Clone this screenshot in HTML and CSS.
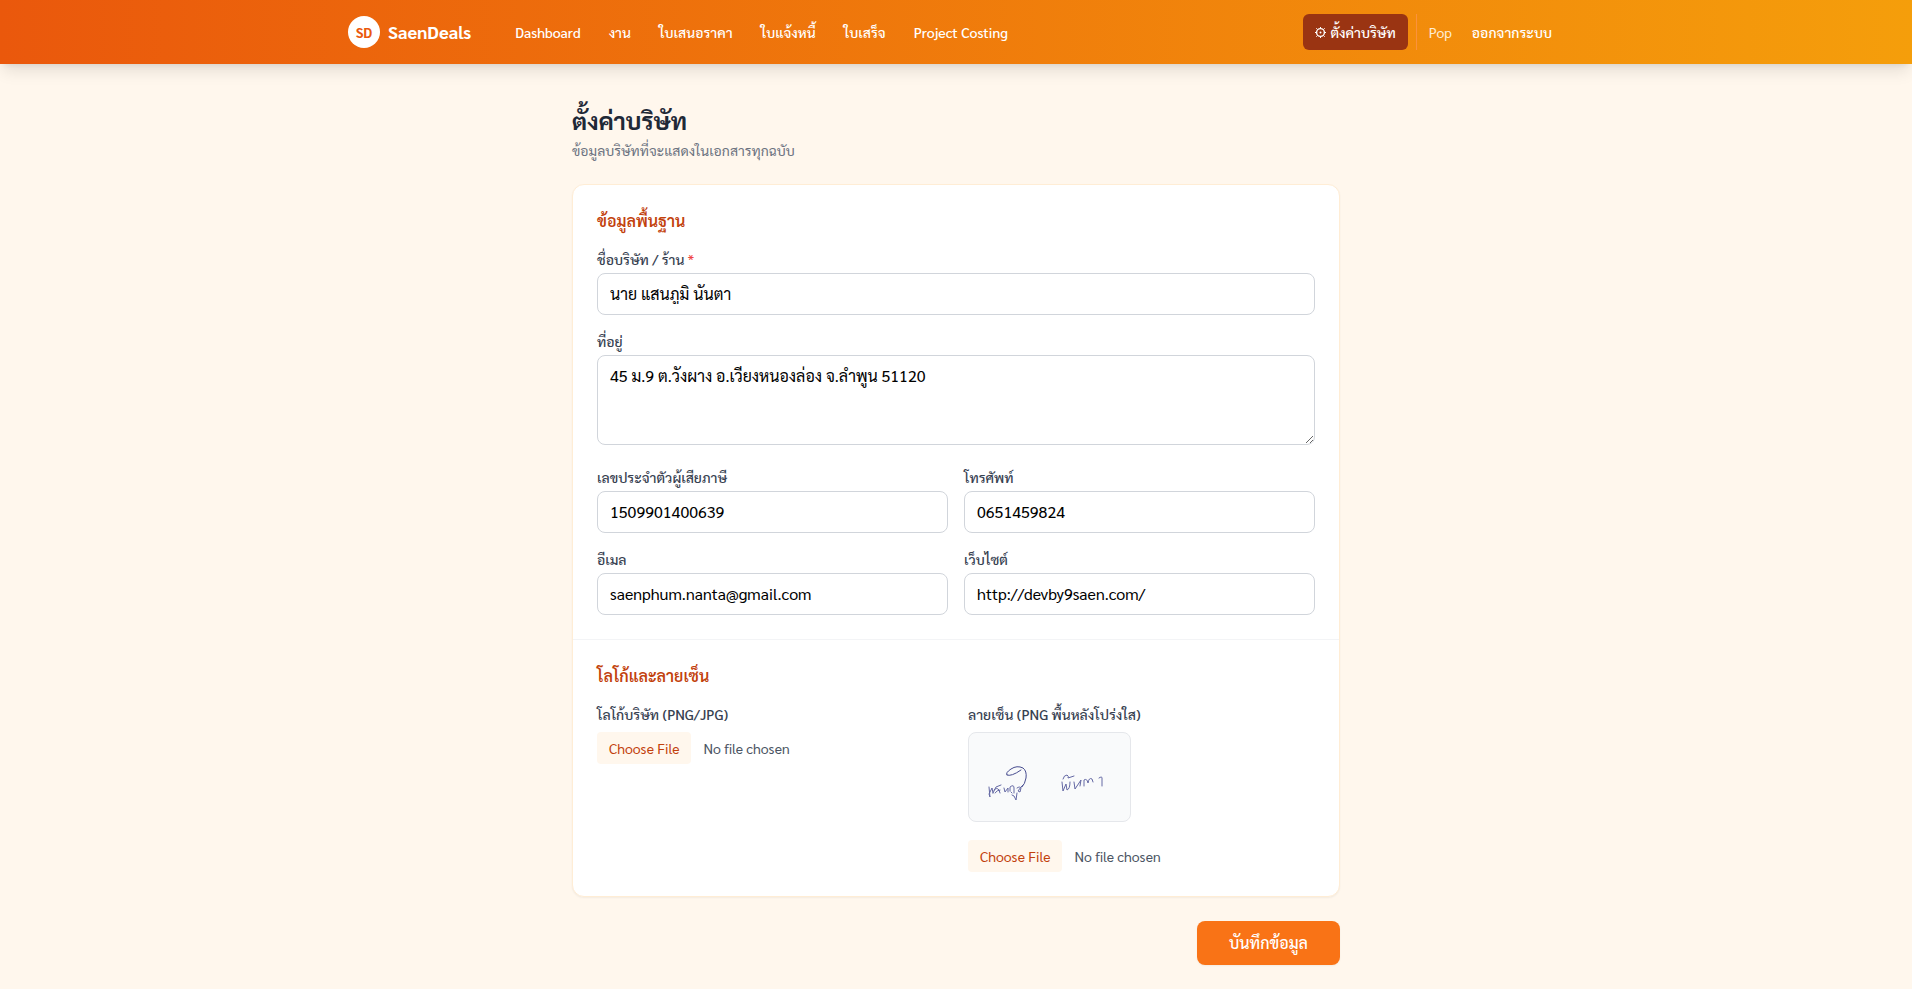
FILE: index.html
```html
<!DOCTYPE html>
<html lang="th">
<head>
  <meta charset="UTF-8">
  <meta name="viewport" content="width=device-width, initial-scale=1.0">
  <title>ตั้งค่าบริษัท - SaenDeals</title>
  <link rel="stylesheet" href="styles.css">
</head>
<body>
  <header class="navbar">
    <div class="navbar-inner">
      <a href="#" class="brand">
        <span class="brand-logo">SD</span>
        <span class="brand-name">SaenDeals</span>
      </a>
      <nav class="nav-links">
        <a href="#" class="nav-link">Dashboard</a>
        <a href="#" class="nav-link">งาน</a>
        <a href="#" class="nav-link">ใบเสนอราคา</a>
        <a href="#" class="nav-link">ใบแจ้งหนี้</a>
        <a href="#" class="nav-link">ใบเสร็จ</a>
        <a href="#" class="nav-link">Project Costing</a>
      </nav>
      <div class="nav-user">
        <a href="#" class="nav-link active">
          <svg class="gear" viewBox="0 0 11 11" fill="none" stroke="currentColor" aria-hidden="true">
            <circle cx="5.5" cy="5.5" r="3.9" stroke-width="1.4"/>
            <circle cx="5.5" cy="5.5" r="1" fill="currentColor" stroke="none"/>
            <path d="M5.500 0v1.200M5.500 9.800V11M0 5.500h1.200M9.800 5.500H11M1.300 1.300l1 1M8.700 8.700l1 1M9.700 1.300l-1 1M2.300 8.700l-1 1"/>
          </svg>
          ตั้งค่าบริษัท
        </a>
        <div class="user-box">
          <span class="user-name">Pop</span>
          <button type="button" class="nav-link">ออกจากระบบ</button>
        </div>
      </div>
    </div>
  </header>

  <main class="page">
    <h1>ตั้งค่าบริษัท</h1>
    <p class="subtitle">ข้อมูลบริษัทที่จะแสดงในเอกสารทุกฉบับ</p>

    <form>
      <div class="card">
        <section class="card-section">
          <h2>ข้อมูลพื้นฐาน</h2>
          <div class="fields">
            <div class="field full">
              <label for="company">ชื่อบริษัท / ร้าน <span class="required">*</span></label>
              <input type="text" id="company" value="นาย แสนภูมิ นันตา" required>
            </div>
            <div class="field full">
              <label for="address">ที่อยู่</label>
              <textarea id="address" rows="3">45 ม.9 ต.วังผาง อ.เวียงหนองล่อง จ.ลำพูน 51120</textarea>
            </div>
            <div class="field">
              <label for="tax-id">เลขประจำตัวผู้เสียภาษี</label>
              <input type="text" id="tax-id" value="1509901400639">
            </div>
            <div class="field">
              <label for="phone">โทรศัพท์</label>
              <input type="text" id="phone" value="0651459824">
            </div>
            <div class="field">
              <label for="email">อีเมล</label>
              <input type="email" id="email" value="saenphum.nanta@gmail.com">
            </div>
            <div class="field">
              <label for="website">เว็บไซต์</label>
              <input type="text" id="website" value="http://devby9saen.com/">
            </div>
          </div>
        </section>

        <section class="card-section">
          <h2>โลโก้และลายเซ็น</h2>
          <div class="uploads">
            <div class="upload">
              <label for="logo">โลโก้บริษัท (PNG/JPG)</label>
              <input type="file" id="logo" accept="image/*">
            </div>
            <div class="upload">
              <label for="signature">ลายเซ็น (PNG พื้นหลังโปร่งใส)</label>
              <div class="preview">
                <svg viewBox="0 0 161 88" role="img" aria-label="ลายเซ็น" fill="none" stroke="#6468a4" stroke-linecap="round" stroke-linejoin="round">
                  <path d="M20 54l1 10-1-3 3-6 1 5M24 60l3-6 5-2M25 57q3-3 5 0l1 3M26 60q2-3 5-3M35 55l1 4 3-4 0 4M41 58l0-4q4-3 4 1l0 5M42 59l1 1M43 62l2 1 2 4 1-7M48 55q3-2 4 0l-1 4-2-1 3-4 2-2"/>
                  <path d="M38 42q-2-2 4-6 6-4 12-1 4 3 3 10-1 6-4 9M38 42q4 2 14-5" stroke="#474c8f"/>
                  <path d="M93 49l1 9 3-7 1 6q3-1 3-8M94 46q1-4 4-4 2 1 1 3l6-2M105 49l1 7 6-9-1 6M115 53v-6q3-2 4 3 1-6 4-4l1 3M130 45q3-2 3 0v8"/>
                </svg>
              </div>
              <input type="file" id="signature" accept="image/png">
            </div>
          </div>
        </section>
      </div>

      <div class="actions">
        <button type="submit" class="save-button">บันทึกข้อมูล</button>
      </div>
    </form>
  </main>
</body>
</html>
```
FILE: styles.css
```css
* {
  box-sizing: border-box;
}
body {
  margin: 0;
  background: #fff7ed;
  color: #000;
  font-family: Sarabun, Roboto, 'Noto Sans Thai', 'Noto Sans', sans-serif;
  font-size: 16px;
  line-height: 24px;
}
h1, h2, p {
  margin: 0;
}
button, input, textarea {
  font: inherit;
  color: inherit;
}

/* Navbar */
.navbar {
  background: linear-gradient(to right, #ea580c, #f59e0b);
  box-shadow: 0 10px 15px -3px rgba(0, 0, 0, 0.1), 0 4px 6px -4px rgba(0, 0, 0, 0.1);
  color: #fff;
}
.navbar-inner {
  display: flex;
  align-items: center;
  max-width: 1280px;
  height: 64px;
  margin: 0 auto;
  padding: 0 32px;
}
.brand {
  display: flex;
  align-items: center;
  gap: 8px;
  margin-right: 32px;
  color: #fff;
  text-decoration: none;
  white-space: nowrap;
}
.brand-logo {
  display: flex;
  align-items: center;
  justify-content: center;
  width: 32px;
  height: 32px;
  border-radius: 50%;
  background: #fff;
  color: #ea580c;
  font-size: 14px;
  font-weight: 700;
}
.brand-name {
  font-size: 18px;
  font-weight: 700;
}
.nav-links {
  display: flex;
  gap: 4px;
}
.nav-link {
  display: flex;
  align-items: center;
  gap: 4px;
  padding: 8px 12px;
  border: 0;
  border-radius: 6px;
  background: transparent;
  color: #fff;
  font-size: 14px;
  font-weight: 500;
  line-height: 20px;
  text-decoration: none;
  white-space: nowrap;
  cursor: pointer;
}
.nav-link.active {
  background: #9a3412;
}
.gear {
  width: 11px;
  height: 11px;
}
.nav-user {
  display: flex;
  gap: 8px;
  margin-left: auto;
}
.user-box {
  display: flex;
  align-items: center;
  gap: 8px;
  padding-left: 12px;
  border-left: 1px solid #fb923c;
}
.user-name {
  color: #ffedd5;
  font-size: 14px;
}

/* Page */
.page {
  max-width: 768px;
  margin: 0 auto;
  padding: 40px 0 24px;
}
h1 {
  color: #1f2937;
  font-size: 24px;
  font-weight: 700;
  line-height: 32px;
}
.subtitle {
  margin: 4px 0 24px;
  color: #6b7280;
  font-size: 14px;
  line-height: 20px;
}
.card {
  border: 1px solid #ffedd5;
  border-radius: 12px;
  background: #fff;
  box-shadow: 0 1px 2px rgba(0, 0, 0, 0.05);
}
.card-section {
  padding: 24px;
}
.card-section + .card-section {
  border-top: 1px solid #f3f4f6;
}
h2 {
  margin-bottom: 16px;
  color: #c2410c;
  font-size: 16px;
  font-weight: 600;
}
label {
  display: block;
  color: #374151;
  font-size: 14px;
  font-weight: 500;
  line-height: 20px;
}
.required {
  color: #ef4444;
}

/* Company fields */
.fields {
  display: grid;
  grid-template-columns: 1fr 1fr;
  gap: 16px;
}
.full {
  grid-column: 1 / -1;
}
.field label {
  margin-bottom: 4px;
}
.field input,
.field textarea {
  display: block;
  width: 100%;
  padding: 8px 12px;
  border: 1px solid #d1d5db;
  border-radius: 8px;
  background: #fff;
}
.field input {
  height: 42px;
  padding: 0 12px 2px;
  line-height: 38px;
}
.field textarea {
  margin-bottom: 6px;
  resize: vertical;
}

/* Uploads */
.uploads {
  display: grid;
  grid-template-columns: 1fr 1fr;
  gap: 24px;
}
.upload label {
  margin-bottom: 8px;
}
.upload input {
  display: block;
  width: 100%;
  color: #4b5563;
  font-size: 14px;
  line-height: 20px;
}
.upload input::file-selector-button {
  height: 32px;
  margin-right: 12px;
  padding: 6px 12px;
  border: 0;
  border-radius: 4px;
  background: #fff7ed;
  color: #c2410c;
  font: inherit;
}
.preview {
  width: 163px;
  height: 90px;
  margin-bottom: 18px;
  border: 1px solid #e5e7eb;
  border-radius: 8px;
  background: #f9fafb;
}
.preview svg {
  display: block;
  width: 100%;
  height: 100%;
}

.actions {
  display: flex;
  justify-content: flex-end;
  margin-top: 24px;
}
.save-button {
  padding: 10px 32px;
  border: 0;
  border-radius: 8px;
  background: #f97316;
  color: #fff;
  font-weight: 500;
  box-shadow: 0 1px 2px rgba(0, 0, 0, 0.05);
  cursor: pointer;
}
```
